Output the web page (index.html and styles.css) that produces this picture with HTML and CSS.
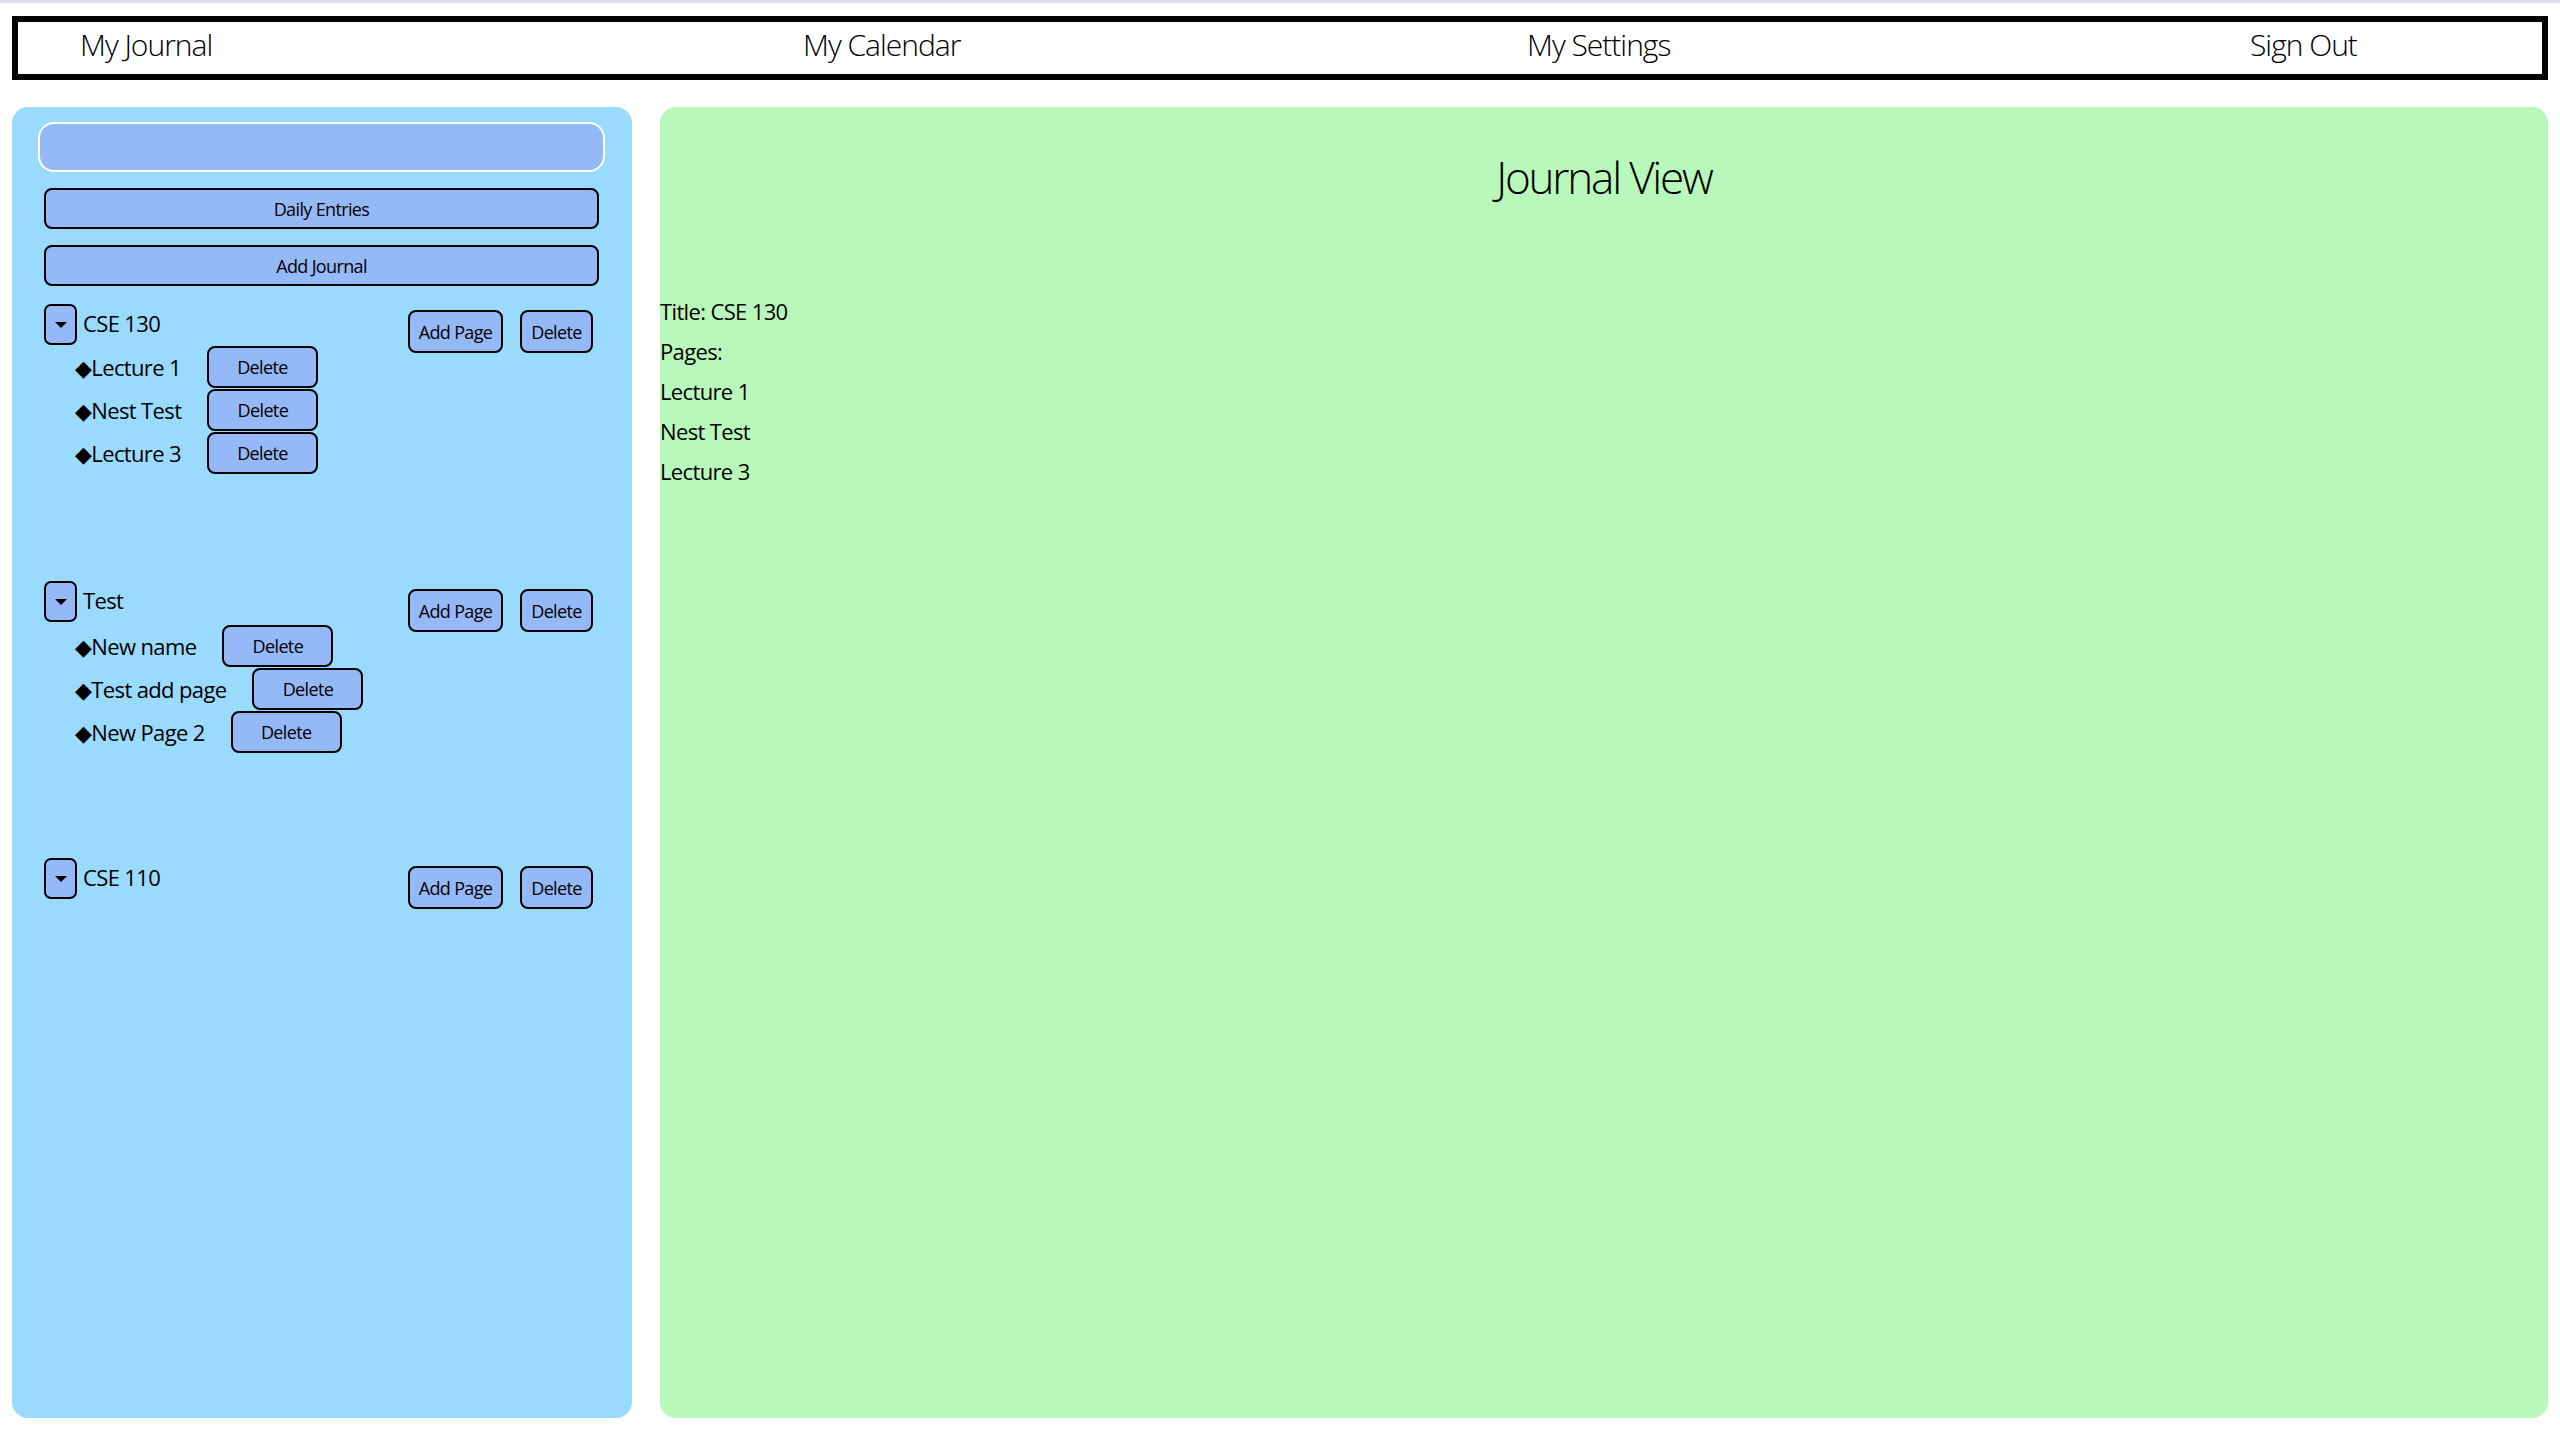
FILE: index.html
```html
<!DOCTYPE html>
<html lang="en">
<head>
<meta charset="utf-8">
<title>My Journal</title>
<link rel="stylesheet" href="styles.css">
</head>
<body>
<div class="topline"></div>
<nav class="nav">
  <a class="nav-item">My Journal</a>
  <a class="nav-item">My Calendar</a>
  <a class="nav-item">My Settings</a>
  <a class="nav-item">Sign Out</a>
</nav>
<main class="main">
  <aside class="sidebar">
    <input class="search" type="text">
    <button class="wide-btn">Daily Entries</button>
    <button class="wide-btn">Add Journal</button>

    <section class="journal">
      <div class="journal-head">
        <button class="toggle"><span class="tri"></span></button>
        <span class="journal-name">CSE 130</span>
        <div class="journal-actions">
          <button class="btn add-btn">Add Page</button>
          <button class="btn del-btn">Delete</button>
        </div>
      </div>
      <ul class="pages">
        <li class="page"><span class="page-name">◆Lecture 1</span><button class="btn page-del">Delete</button></li>
        <li class="page"><span class="page-name">◆Nest Test</span><button class="btn page-del">Delete</button></li>
        <li class="page"><span class="page-name">◆Lecture 3</span><button class="btn page-del">Delete</button></li>
      </ul>
    </section>

    <section class="journal">
      <div class="journal-head">
        <button class="toggle"><span class="tri"></span></button>
        <span class="journal-name">Test</span>
        <div class="journal-actions lower">
          <button class="btn add-btn">Add Page</button>
          <button class="btn del-btn">Delete</button>
        </div>
      </div>
      <ul class="pages">
        <li class="page"><span class="page-name">◆New name</span><button class="btn page-del">Delete</button></li>
        <li class="page"><span class="page-name">◆Test add page</span><button class="btn page-del">Delete</button></li>
        <li class="page"><span class="page-name">◆New Page 2</span><button class="btn page-del">Delete</button></li>
      </ul>
    </section>

    <section class="journal">
      <div class="journal-head">
        <button class="toggle"><span class="tri"></span></button>
        <span class="journal-name">CSE 110</span>
        <div class="journal-actions lower">
          <button class="btn add-btn">Add Page</button>
          <button class="btn del-btn">Delete</button>
        </div>
      </div>
    </section>
  </aside>

  <section class="view">
    <h1 class="view-title">Journal View</h1>
    <div class="details">
      <p>Title: CSE 130</p>
      <p>Pages:</p>
      <p>Lecture 1</p>
      <p>Nest Test</p>
      <p>Lecture 3</p>
    </div>
  </section>
</main>
</body>
</html>
```

FILE: styles.css
```css
* { box-sizing: border-box; }

body {
  margin: 0;
  background: #ffffff;
  font-family: "Open Sans", "Liberation Sans", sans-serif;
  font-stretch: 88%;
  letter-spacing: -0.04em;
  color: #000;
}

button, input { font: inherit; letter-spacing: inherit; }

.topline {
  height: 3px;
  background: #dddde5;
}

.nav {
  margin: 13px 12px 0 12px;
  height: 64px;
  border: 6px solid #000;
  display: grid;
  grid-template-columns: 723px 724px 723px auto;
  align-items: center;
  padding-left: 62px;
  padding-bottom: 7px;
  overflow: hidden;
}

.nav-item {
  font-size: 30px;
  font-weight: 300;
  letter-spacing: -1px;
  white-space: nowrap;
  line-height: 40px;
}

.main {
  display: flex;
  gap: 28px;
  margin: 27px 12px 0 12px;
  height: 1311px;
}

.sidebar {
  width: 620px;
  flex-shrink: 0;
  background: #9adafd;
  border-radius: 16px;
  padding: 15px 27px 0 26px;
  display: flex;
  flex-direction: column;
}

.search {
  width: 567px;
  height: 50px;
  background: #95b8f6;
  border: 2px solid #ffffff;
  border-radius: 16px;
  margin: 0 0 16px 0;
  outline: none;
}

.wide-btn {
  margin: 0 6px 16px 6px;
  height: 41px;
  background: #95b8f6;
  border: 2px solid #000;
  border-radius: 8px;
  font-size: 18px;
  color: #000;
}

.btn {
  background: #95b8f6;
  border: 2px solid #000;
  border-radius: 8px;
  font-size: 18px;
  color: #000;
  height: 42px;
  padding: 0;
}

.journal {
  height: 275px;
  margin: 2px 6px 0 6px;
}

.journal-head {
  display: flex;
  align-items: flex-start;
}

.toggle {
  width: 33px;
  height: 41px;
  background: #95b8f6;
  border: 2px solid #000;
  border-radius: 7px;
  padding: 0;
  display: flex;
  align-items: center;
  justify-content: center;
}

.tri {
  width: 0;
  height: 0;
  border-left: 6px solid transparent;
  border-right: 6px solid transparent;
  border-top: 6px solid #000;
}

.journal-name {
  margin-left: 6px;
  font-size: 22px;
  line-height: 38px;
}

.journal-actions {
  margin-left: auto;
  margin-right: 6px;
  display: flex;
  gap: 17px;
  padding-top: 6px;
}

.journal-actions.lower { padding-top: 8px; }

.journal-actions .btn { height: 43px; }

.add-btn { width: 95px; }
.del-btn { width: 73px; }

.pages {
  list-style: none;
  margin: -8px 0 0 0;
  padding: 0 0 0 31px;
}

.page {
  display: flex;
  align-items: center;
  height: 43px;
}

.page-name {
  font-size: 22px;
}

.page-del {
  margin-left: 26px;
  width: 111px;
}

.view {
  flex: 1;
  background: #b8f8ba;
  border-radius: 16px;
}

.view-title {
  margin: 40px 0 0 0;
  text-align: center;
  font-size: 44px;
  font-weight: 300;
  letter-spacing: -0.05em;
  line-height: 60px;
}

.details {
  margin-top: 84px;
}

.details p {
  margin: 0;
  font-size: 22px;
  line-height: 40px;
}
```
